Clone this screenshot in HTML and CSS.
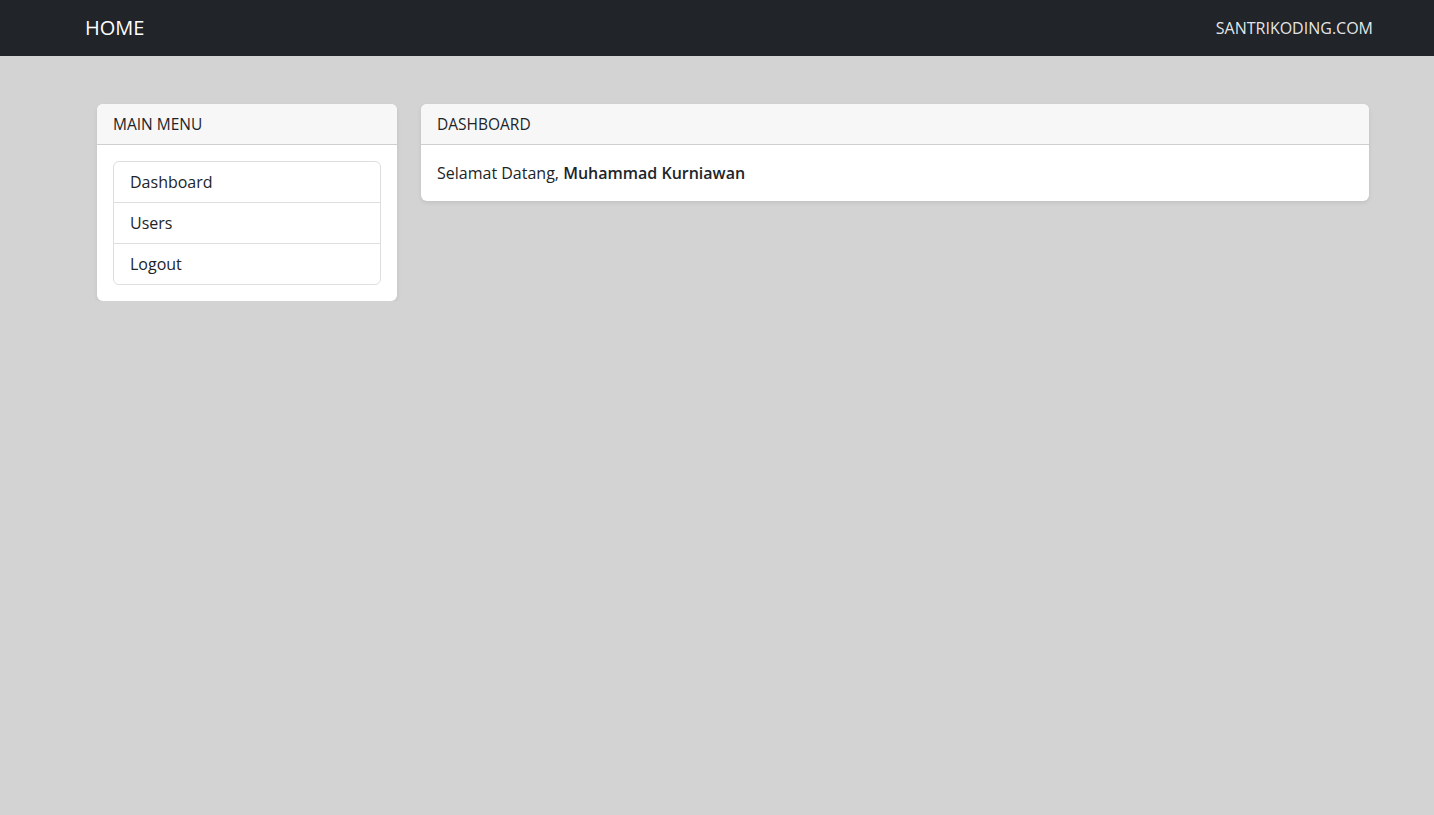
FILE: index.html
```html
<!DOCTYPE html>
<html lang="id">

<head>
    <meta charset="UTF-8">
    <meta name="viewport" content="width=device-width, initial-scale=1.0">
    <title>Dashboard</title>
    <link rel="stylesheet" href="styles.css">
</head>

<body>
    <nav class="navbar">
        <a class="navbar-brand" href="#">HOME</a>
        <a class="nav-link" href="#">SANTRIKODING.COM</a>
    </nav>

    <div class="container">
        <div class="sidebar">
            <div class="card">
                <div class="card-header">MAIN MENU</div>
                <div class="card-body">
                    <ul class="list-group">
                        <li class="list-group-item"><a href="#">Dashboard</a></li>
                        <li class="list-group-item"><a href="#">Users</a></li>
                        <li class="list-group-item"><a href="#">Logout</a></li>
                    </ul>
                </div>
            </div>
        </div>
        <div class="content">
            <div class="card">
                <div class="card-header">DASHBOARD</div>
                <div class="card-body">
                    Selamat Datang, <strong>Muhammad Kurniawan</strong>
                </div>
            </div>
        </div>
    </div>
</body>

</html>
```
FILE: styles.css
```css
body {
    font-family: 'Open Sans', 'Noto Sans', sans-serif;
    font-size: 16px;
    line-height: 1.5;
    color: #212529;
    background: #d3d3d3;
    margin: 0;
}

a {
    color: inherit;
    text-decoration: none;
}

.navbar {
    background: #212529;
    height: 56px;
    display: flex;
    align-items: center;
    justify-content: space-between;
    padding: 0 61px 0 85px;
    box-sizing: border-box;
}

.navbar-brand {
    color: #fff;
    font-size: 20px;
    line-height: 30px;
}

.nav-link {
    color: rgba(255, 255, 255, 0.9);
    font-size: 16px;
}

.container {
    display: flex;
    gap: 24px;
    align-items: flex-start;
    width: 1272px;
    margin: 48px auto 0 97px;
}

.sidebar {
    width: 300px;
    flex-shrink: 0;
}

.content {
    flex: 1;
}

.card {
    background: #fff;
    border-radius: 6px;
    box-shadow: 0 2px 4px rgba(0, 0, 0, 0.08);
    overflow: hidden;
}

.card-header {
    background: #f7f7f7;
    border-bottom: 1px solid #cfcfcf;
    padding: 8px 16px;
    line-height: 24px;
    font-size: 15.5px;
}

.card-body {
    padding: 16px;
}

.list-group {
    list-style: none;
    margin: 0;
    padding: 0;
    border: 1px solid #dedede;
    border-radius: 6px;
}

.list-group-item {
    padding: 8px 16px;
    line-height: 24px;
    border-top: 1px solid #dedede;
}

.list-group-item:first-child {
    border-top: none;
}

strong {
    font-weight: 600;
}
```
